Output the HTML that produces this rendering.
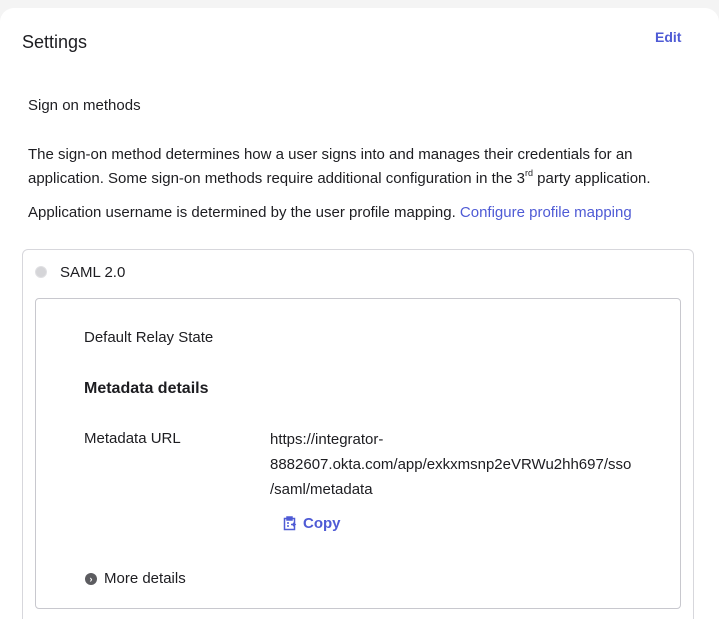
<!DOCTYPE html>
<html><head><style>
html,body{margin:0;width:719px;height:619px;overflow:hidden}
body{background:#f4f4f4;font-family:"Liberation Sans",sans-serif;color:#1d1d21;position:relative}
.card{position:absolute;left:0;top:8px;width:719px;height:611px;background:#fff;border-radius:14px 14px 0 0}
.a{position:absolute;white-space:nowrap}
.link{color:#4f5bd5}
.box1{position:absolute;left:22px;top:249px;width:670px;height:380px;border:1px solid #d7d7dc;border-radius:6px}
.box2{position:absolute;left:35px;top:298px;width:644px;height:309px;border:1px solid #c8c8ce;border-radius:4px}
sup{font-size:9px;line-height:0;position:relative;top:-1px}
</style></head><body>
<div class="card"></div>
<div class="a" style="left:22px;top:32px;font-size:18px">Settings</div>
<div class="a link" style="left:655px;top:29px;font-size:14px;font-weight:bold">Edit</div>
<div class="a" style="left:28px;top:97px;font-size:15px">Sign on methods</div>
<div class="a" style="left:28px;top:143px;font-size:15px;line-height:24px">The sign-on method determines how a user signs into and manages their credentials for an<br>application. Some sign-on methods require additional configuration in the 3<sup>rd</sup> party application.</div>
<div class="a" style="left:28px;top:204px;font-size:15px">Application username is determined by the user profile mapping. <span class="link">Configure profile mapping</span></div>
<div class="box1"></div>
<div class="a" style="left:35px;top:266px;width:10px;height:10px;border-radius:50%;background:#d5d5d8;border:1px solid #e0e0e3"></div>
<div class="a" style="left:60px;top:264px;font-size:15px">SAML 2.0</div>
<div class="box2"></div>
<div class="a" style="left:84px;top:329px;font-size:15px">Default Relay State</div>
<div class="a" style="left:84px;top:380px;font-size:16px;font-weight:bold">Metadata details</div>
<div class="a" style="left:84px;top:430px;font-size:15px">Metadata URL</div>
<div class="a" style="left:270px;top:427px;font-size:15px;line-height:25px">https://integrator-<br>8882607.okta.com/app/exkxmsnp2eVRWu2hh697/sso<br>/saml/metadata</div>
<svg class="a" style="left:283px;top:516px" width="14" height="15" viewBox="0 0 14 15" fill="none" stroke="#4f5bd5" stroke-width="1.5"><rect x="1.5" y="2.5" width="10" height="11"/><rect x="4" y="1" width="5" height="3" fill="#4f5bd5"/><path d="M4 7h2M4 10h2M8 8.5h4M10 7l2 1.5-2 1.5"/></svg>
<div class="a link" style="left:303px;top:515px;font-size:15px;font-weight:bold">Copy</div>
<div class="a" style="left:85px;top:573px;width:12px;height:12px;border-radius:50%;background:#5c5c60;color:#fff;font-size:9px;line-height:12px;text-align:center;font-weight:bold">›</div>
<div class="a" style="left:104px;top:570px;font-size:15px">More details</div>
</body></html>
